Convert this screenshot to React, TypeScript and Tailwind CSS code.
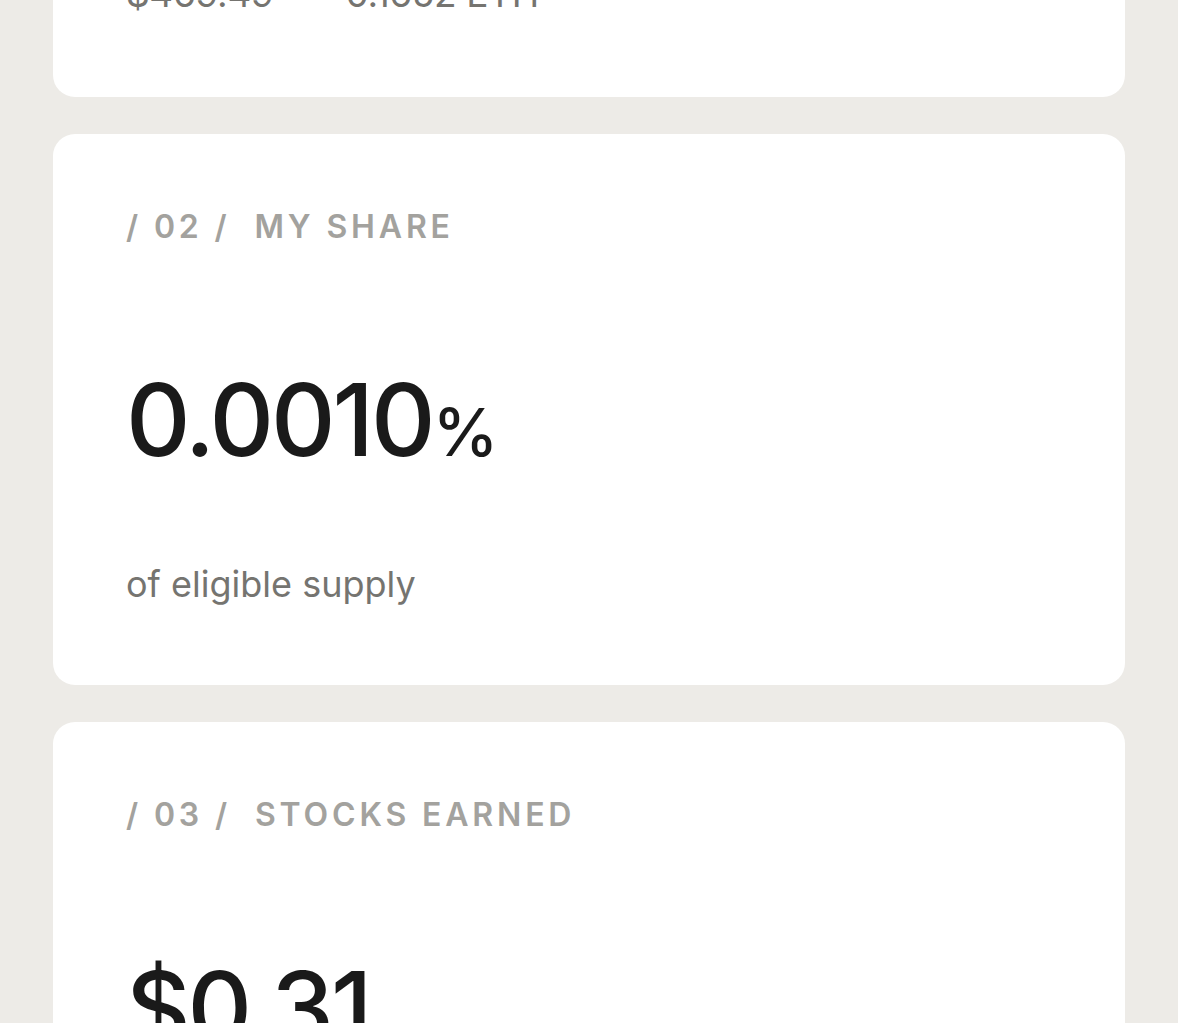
// App.tsx — reward summary cards (scrolled view)

const sans = 'font-["Inter","Liberation_Sans",sans-serif]'

function Label({ index, title }: { index: string; title: string }) {
  return (
    <div className="flex items-baseline gap-[24px] text-[32px] font-semibold uppercase leading-none tracking-[0.12em] text-[#a3a29e]">
      <span>/ {index} /</span>
      <span>{title}</span>
    </div>
  )
}

function BigValue({ value, unit }: { value: string; unit?: string }) {
  return (
    <div className="flex items-baseline text-[100px] font-medium leading-none tracking-[-0.03em] text-[#1a1a1a]">
      <span>{value}</span>
      {unit && <span className="text-[66px] tracking-[-0.02em]">{unit}</span>}
    </div>
  )
}

export default function App() {
  return (
    <div className={`${sans} min-h-[1023px] w-full overflow-hidden bg-[#edebe7]`}>
      <div className="flex h-[1023px] flex-col gap-[37px] overflow-hidden px-[53px]">
        {/* 01 — balance (scrolled off top) */}
        <section className="-mt-[25px] shrink-0 rounded-b-[22px] bg-white px-[73px] pb-[85px]">
          <div className="flex items-baseline gap-[72px] text-[37px] leading-none tracking-[-0.01em] text-[#757470]">
            <span>$469.49</span>
            <span>0.1652 ETH</span>
          </div>
        </section>

        {/* 02 — my share */}
        <section className="shrink-0 rounded-[22px] bg-white px-[73px] pt-[77px] pb-[83px]">
          <Label index="02" title="My Share" />
          <div className="mt-[127px]">
            <BigValue value="0.0010" unit="%" />
          </div>
          <p className="mt-[96px] text-[36px] leading-none text-[#757470]">
            of eligible supply
          </p>
        </section>

        {/* 03 — stocks earned */}
        <section className="shrink-0 rounded-t-[22px] bg-white px-[73px] pt-[77px] pb-[200px]">
          <Label index="03" title="Stocks Earned" />
          <div className="mt-[127px]">
            <BigValue value="$0.31" />
          </div>
        </section>
      </div>
    </div>
  )
}
